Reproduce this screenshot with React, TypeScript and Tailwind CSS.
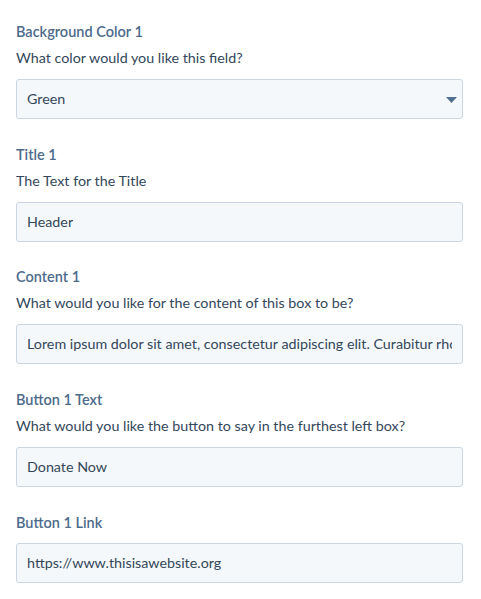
import React from "react";

type Field = {
  label: string;
  desc?: string;
  value: string;
  select?: boolean;
  gap: string;
};

const fields: Field[] = [
  { label: "Background Color 1", desc: "What color would you like this field?", value: "Green", select: true, gap: "mt-0" },
  { label: "Title 1", desc: "The Text for the Title", value: "Header", gap: "mt-[26px]" },
  { label: "Content 1", desc: "What would you like for the content of this box to be?", value: "Lorem ipsum dolor sit amet, consectetur adipiscing elit. Curabitur rhoncus", gap: "mt-[25px]" },
  { label: "Button 1 Text", desc: "What would you like the button to say in the furthest left box?", value: "Donate Now", gap: "mt-[26px]" },
  { label: "Button 1 Link", value: "https://www.thisisawebsite.org", gap: "mt-[26px]" },
];

export default function App() {
  return (
    <div
      className="w-[481px] h-[599px] bg-white pl-4 pt-[22px] overflow-hidden"
      style={{ fontFamily: "Lato, 'Noto Sans', sans-serif" }}
    >
      <div className="w-[447px] flex flex-col">
        {fields.map((f) => (
          <div key={f.label} className={`${f.gap} flex flex-col`}>
            <div className="h-5 leading-5 text-[14.5px] font-semibold text-[#4d6b8c]">{f.label}</div>
            {f.desc && (
              <div className="mt-[6px] h-5 leading-5 text-[14.3px] text-[#33475b]">{f.desc}</div>
            )}
            <div
              className={`${f.desc ? "mt-[11px]" : "mt-[10px]"} relative h-10 rounded-[3px] border border-[#cbd6e2] bg-[#f5f8fa] flex items-center pl-[10px] pr-[10px] overflow-hidden`}
            >
              <span className="block min-w-0 text-[14.3px] text-[#33475b] whitespace-nowrap overflow-hidden">{f.value}</span>
              {f.select && (
                <svg className="absolute right-[5px] top-[17px]" width="11" height="6" viewBox="0 0 11 6">
                  <path d="M0 0 L11 0 L5.5 6 Z" fill="#516f90" />
                </svg>
              )}
            </div>
          </div>
        ))}
      </div>
    </div>
  );
}
